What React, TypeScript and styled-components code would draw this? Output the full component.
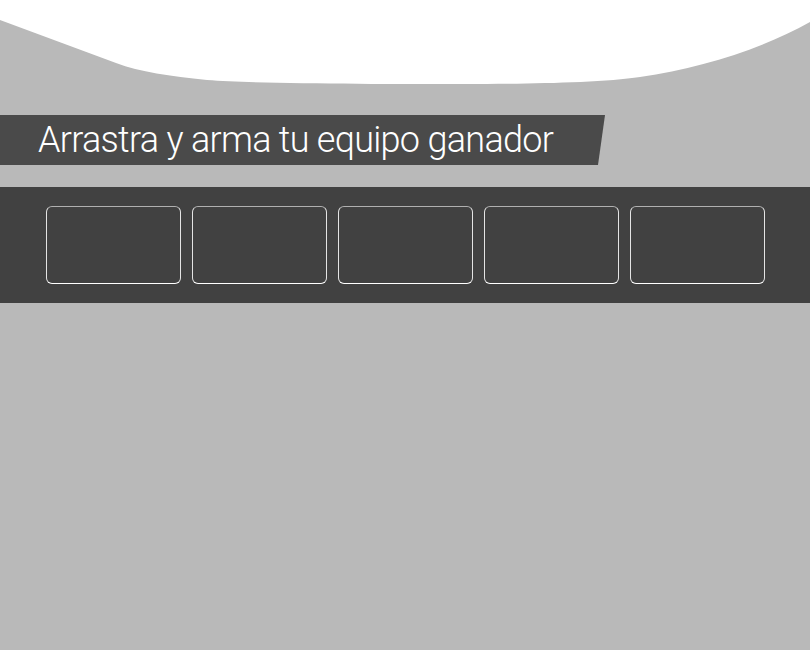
import React from "react";
import styled, { createGlobalStyle } from "styled-components";

const GlobalStyle = createGlobalStyle`
  html, body {
    margin: 0;
    padding: 0;
    background: #b9b9b9;
  }
`;

//------------Styled Components-------------
const Page = styled.div`
  width: 810px;
  height: 650px;
  overflow: hidden;
  background: #b9b9b9;
  display: flex;
  flex-direction: column;
`;

const Wave = styled.svg`
  display: block;
  width: 810px;
  height: 100px;
`;

const Banner = styled.div`
  margin-top: 15px;
  width: 605px;
  height: 50px;
  background: #4a4a4a;
  clip-path: polygon(0 0, 100% 0, 598px 100%, 0 100%);
  display: flex;
  align-items: center;
  padding-left: 38px;
  box-sizing: border-box;
`;

const Title = styled.h1`
  margin: 0;
  font-family: "Roboto", "Liberation Sans", sans-serif;
  font-weight: 300;
  font-size: 36px;
  color: #ffffff;
  white-space: nowrap;
  letter-spacing: -0.7px;
`;

const Tray = styled.div`
  margin-top: 22px;
  height: 116px;
  background: #414141;
  display: flex;
  align-items: center;
  gap: 11px;
  padding: 0 45px 0 46px;
  box-sizing: border-box;
`;

const Slot = styled.div`
  width: 135px;
  height: 78px;
  box-sizing: border-box;
  border: 1px solid #e4e4e4;
  border-top-color: #b0b0b0;
  border-bottom-color: #ffffff;
  border-radius: 6px;
`;

//=========================================

const slots = [1, 2, 3, 4, 5];

export default function App() {
  return (
    <Page>
      <GlobalStyle />
      <Wave viewBox="0 0 810 100">
        <path
          d="M0,0 H810 V22 C760,50 700,68 640,77 C600,83 520,84 465,84 C380,84 260,84 207,80 C170,76 140,72 116,63 L0,20 Z"
          fill="#ffffff"
        />
      </Wave>
      <Banner>
        <Title>Arrastra y arma tu equipo ganador</Title>
      </Banner>
      <Tray>
        {slots.map((n) => (
          <Slot key={n} />
        ))}
      </Tray>
    </Page>
  );
}
